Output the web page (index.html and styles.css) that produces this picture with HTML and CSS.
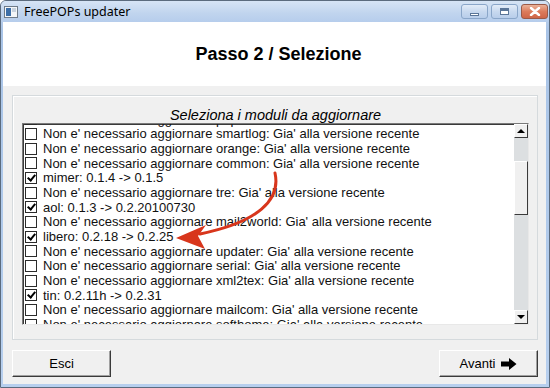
FILE: index.html
```html
<!DOCTYPE html>
<html lang="it">
  <head>
    <meta charset="UTF-8" />
    <title>FreePOPs updater</title>
    <link rel="stylesheet" href="styles.css">
  </head>
  <body>
    <div class="window">
      <div class="titlebar">
        <svg class="app-icon" width="14" height="12" viewBox="0 0 14 12">
          <rect x="0.5" y="0.5" width="13" height="11" fill="#f4f6f8" stroke="#6f7b88" />
          <rect x="2" y="2" width="5" height="8" fill="#3d6fa8" />
          <rect x="8" y="2" width="4" height="4" fill="#c9d3de" />
        </svg>
        <span class="title">FreePOPs updater</span>
        <div class="controls">
          <span class="ctl"><span class="ico-min"></span></span>
          <span class="ctl"><span class="ico-max"></span></span>
          <span class="ctl close">
            <svg width="14" height="9" viewBox="0 0 14 9">
              <path d="M3 1 L11 8 M11 1 L3 8" stroke="#fff" stroke-width="2.4" stroke-linecap="round" />
            </svg>
          </span>
        </div>
      </div>

      <div class="client">
        <div class="header">
          <h1>Passo 2 / Selezione</h1>
        </div>

        <div class="content">
          <div class="group">
            <div class="legend">Seleziona i moduli da aggiornare</div>
            <div class="listbox">
              <div class="items">
                <ul>
                  <li><span class="check"></span>Non e' necessario aggiornare popforward: Gia' alla versione recente</li>
                  <li><span class="check"></span>Non e' necessario aggiornare smartlog: Gia' alla versione recente</li>
                  <li><span class="check"></span>Non e' necessario aggiornare orange: Gia' alla versione recente</li>
                  <li><span class="check"></span>Non e' necessario aggiornare common: Gia' alla versione recente</li>
                  <li><span class="check checked"></span>mimer: 0.1.4 -&gt; 0.1.5</li>
                  <li><span class="check"></span>Non e' necessario aggiornare tre: Gia' alla versione recente</li>
                  <li><span class="check checked"></span>aol: 0.1.3 -&gt; 0.2.20100730</li>
                  <li><span class="check"></span>Non e' necessario aggiornare mail2world: Gia' alla versione recente</li>
                  <li><span class="check checked"></span>libero: 0.2.18 -&gt; 0.2.25</li>
                  <li><span class="check"></span>Non e' necessario aggiornare updater: Gia' alla versione recente</li>
                  <li><span class="check"></span>Non e' necessario aggiornare serial: Gia' alla versione recente</li>
                  <li><span class="check"></span>Non e' necessario aggiornare xml2tex: Gia' alla versione recente</li>
                  <li><span class="check checked"></span>tin: 0.2.11h -&gt; 0.2.31</li>
                  <li><span class="check"></span>Non e' necessario aggiornare mailcom: Gia' alla versione recente</li>
                  <li><span class="check"></span>Non e' necessario aggiornare softhome: Gia' alla versione recente</li>
                  <li><span class="check"></span>Non e' necessario aggiornare hotmail: Gia' alla versione recente</li>
                </ul>
              </div>
              <div class="scrollbar">
                <div class="sb-btn up"></div>
                <div class="sb-track"><div class="sb-thumb"></div></div>
                <div class="sb-btn down"></div>
              </div>
            </div>
          </div>

          <div class="buttons">
            <button class="btn">Esci</button>
            <button class="btn">
              Avanti
              <svg class="next-icon" width="16" height="12" viewBox="0 0 16 12">
                <path d="M0 3.5 H8 V0 L15.5 6 L8 12 V8.5 H0 Z" fill="#000" />
              </svg>
            </button>
          </div>
        </div>
      </div>

      <!-- freccia rossa di annotazione -->
      <svg class="annotation" width="550" height="388" viewBox="0 0 550 388">
        <path d="M275 173 C281 200 258 222 200 234" fill="none" stroke="#d8361c" stroke-width="3" stroke-linecap="round" />
        <path d="M176 238 L206 225 L198 236 L205 249 Z" fill="#d8361c" />
      </svg>
    </div>
  </body>
</html>
```

FILE: styles.css
```css
* {
  margin: 0;
  padding: 0;
  box-sizing: border-box;
}

body {
  background-color: #ffffff;
  font-family: "Liberation Sans", Arial, sans-serif;
}

.window {
  position: relative;
  width: 550px;
  height: 388px;
  display: flex;
  flex-direction: column;
  border: 1px solid #5b6b7e;
  border-radius: 6px 6px 0 0;
  background: linear-gradient(to bottom, #c9daf0, #a9c4e7 30px, #b7cfee);
  overflow: hidden;
}

/* barra del titolo */
.titlebar {
  height: 21px;
  display: flex;
  align-items: center;
  padding-left: 3px;
  background: linear-gradient(to bottom, #d6e4f5, #c0d4ee 60%, #b6cdec);
}

.app-icon {
  margin-top: 1px;
}

.title {
  margin-left: 6px;
  font-family: "Noto Sans", "DejaVu Sans", sans-serif;
  font-size: 12.5px;
  color: #000;
}

.controls {
  margin-left: auto;
  margin-right: 1px;
  display: flex;
  gap: 3px;
  align-self: flex-start;
  margin-top: 3px;
}

.ctl {
  width: 27px;
  height: 15px;
  display: flex;
  align-items: center;
  justify-content: center;
  border: 1px solid #8aa6c9;
  border-radius: 3px;
  background: linear-gradient(to bottom, #e3ecf8, #c8d9ef 50%, #b8cdea);
}

.ctl.close {
  border-color: #9a5a48;
  background: linear-gradient(to bottom, #eab29a, #dc7c5c 50%, #cf6648);
}

.ico-min {
  width: 9px;
  height: 3px;
  margin-top: 5px;
  background: #fff;
  border: 1px solid #5a7598;
}

.ico-max {
  width: 9px;
  height: 7px;
  background: #fff;
  border: 1px solid #5a7598;
  box-shadow: inset 0 2px 0 #5a7598;
}

/* area client */
.client {
  flex: 1;
  margin: 0 3px 3px 2px;
  background-color: #f0f0f0;
  display: flex;
  flex-direction: column;
}

.header {
  height: 64px;
  background-color: #ffffff;
  display: flex;
  align-items: center;
  justify-content: center;
}

.header h1 {
  font-size: 18px;
  font-weight: bold;
  color: #000;
  padding-left: 8px;
}

.content {
  padding: 9px 8px 0 9px;
}

.group {
  height: 245px;
  border: 1px solid #d5dadd;
  box-shadow: inset 1px 1px 0 #ffffff;
  padding: 11px 8px 0 9px;
}

.legend {
  height: 16px;
  line-height: 16px;
  text-align: center;
  font-size: 14.5px;
  font-style: italic;
  color: #000;
}

.listbox {
  height: 202px;
  display: flex;
  background-color: #ffffff;
  border: 1px solid;
  border-color: #7a7a7a #e8e8e8 #e8e8e8 #7a7a7a;
  box-shadow: inset 1px 1px 0 #3a3a3a;
}

.items {
  flex: 1;
  overflow: hidden;
  padding-left: 2px;
}

.items ul {
  list-style-type: none;
  margin-top: -12px;
}

.items li {
  height: 14.67px;
  display: flex;
  align-items: center;
  font-size: 13px;
  color: #111;
  white-space: nowrap;
}

.check {
  position: relative;
  width: 12px;
  height: 12px;
  margin-right: 6px;
  flex-shrink: 0;
  border: 1px solid #2b2b2b;
  background-color: #ffffff;
}

.check.checked::after {
  content: "";
  position: absolute;
  left: 3px;
  top: 0px;
  width: 3px;
  height: 6px;
  border-right: 2px solid #000;
  border-bottom: 2px solid #000;
  transform: rotate(40deg);
}

/* barra di scorrimento */
.scrollbar {
  width: 14px;
  display: flex;
  flex-direction: column;
  background-color: #dcdfe1;
}

.sb-btn {
  height: 14px;
  position: relative;
  background-color: #f0f0f0;
  border: 1px solid;
  border-color: #ffffff #3a3a3a #3a3a3a #ffffff;
}

.sb-btn::after {
  content: "";
  position: absolute;
  left: 2px;
  border-left: 4px solid transparent;
  border-right: 4px solid transparent;
}

.sb-btn.up::after {
  top: 4px;
  border-bottom: 4px solid #000;
}

.sb-btn.down::after {
  top: 4px;
  border-top: 4px solid #000;
}

.sb-track {
  flex: 1;
}

.sb-thumb {
  margin-top: 23px;
  height: 54px;
  background-color: #f0f0f0;
  border: 1px solid;
  border-color: #ffffff #3a3a3a #3a3a3a #ffffff;
}

/* pulsanti */
.buttons {
  display: flex;
  justify-content: space-between;
  margin-top: 10px;
}

.btn {
  width: 99px;
  height: 27px;
  display: flex;
  align-items: center;
  justify-content: center;
  gap: 6px;
  font-family: "Liberation Sans", Arial, sans-serif;
  font-size: 13px;
  color: #000;
  background-color: #f0f0f0;
  border: 1px solid;
  border-color: #ffffff #3a3a3a #3a3a3a #ffffff;
  box-shadow: inset -1px -1px 0 #a0a0a0;
}

.btn .next-icon {
  margin-top: 1px;
}

.annotation {
  position: absolute;
  left: -1px;
  top: -1px;
  pointer-events: none;
}
```
